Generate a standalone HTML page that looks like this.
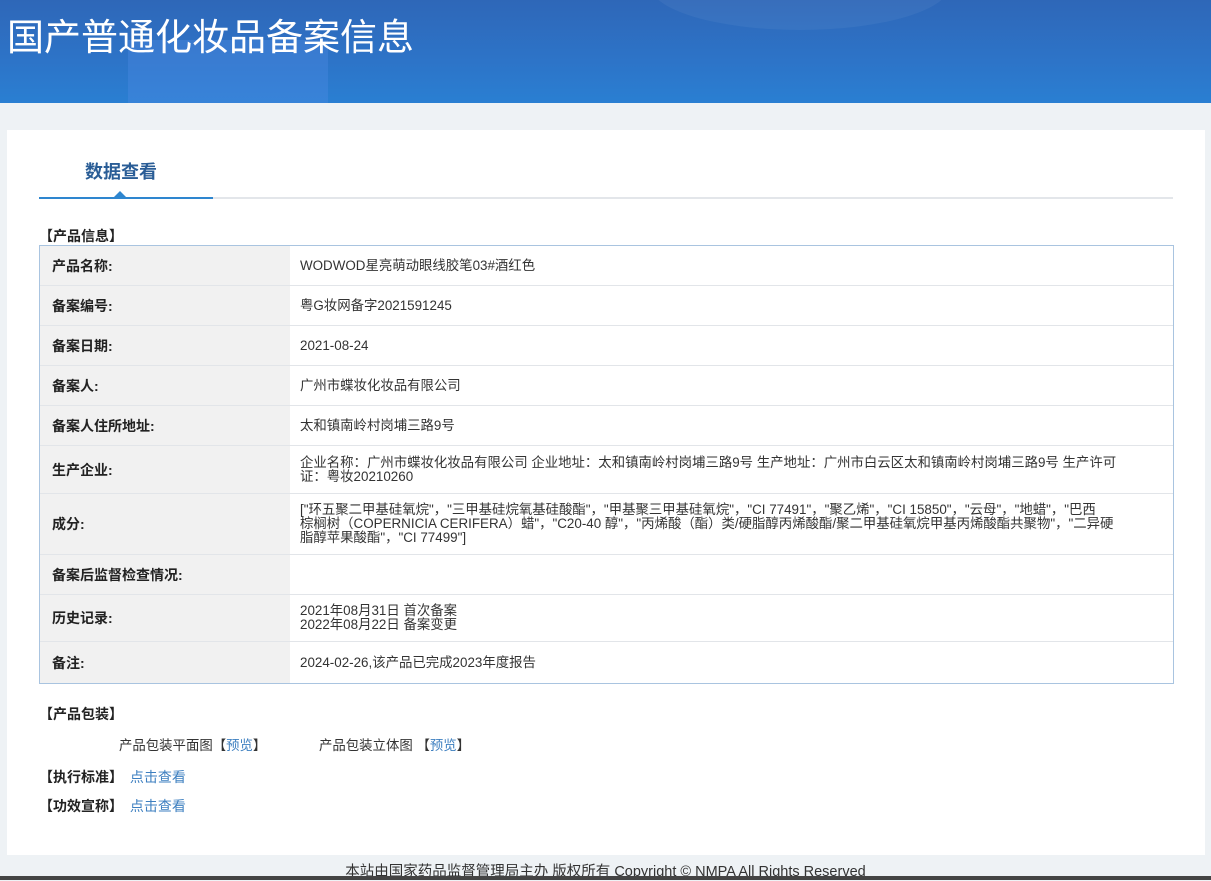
<!DOCTYPE html>
<html><head><meta charset="utf-8"><style>
*{margin:0;padding:0;box-sizing:border-box}
body{width:1211px;height:880px;background:#eef2f5;font-family:"Liberation Sans","Noto Sans CJK SC",sans-serif;color:#333;position:relative;overflow:hidden}
.hd{position:absolute;left:0;top:0;width:1211px;height:103px;background:linear-gradient(180deg,#2e67b8 0%,#2d74c8 60%,#2a7fd2 100%);overflow:hidden}
.hd .b1{position:absolute;left:128px;top:40px;width:200px;height:63px;background:rgba(80,140,230,.35)}
.hd .b2{position:absolute;left:650px;top:-60px;width:300px;height:90px;border-radius:50%;background:rgba(255,255,255,.05)}
.hd h1{position:absolute;left:7px;top:7px;font-size:37px;font-weight:normal;color:#fff;font-family:"Liberation Sans","Noto Sans CJK SC",sans-serif}
.pn{position:absolute;left:7px;top:130px;width:1198px;height:725px;background:#fff}
.tab{position:absolute;left:78px;top:28px;font-size:18px;font-weight:bold;color:#2a5d96}
.tl{position:absolute;left:32px;top:67px;width:1134px;height:2px;background:#e3e6ea}
.tl2{position:absolute;left:32px;top:67px;width:174px;height:2px;background:#2e86cf}
.tri{position:absolute;left:106px;top:61px;width:0;height:0;border-left:7px solid transparent;border-right:7px solid transparent;border-bottom:7px solid #2e86cf}
.sec{position:absolute;font-size:14px;font-weight:bold;color:#222}
table{position:absolute;left:32px;top:115px;width:1135px;border-collapse:separate;border-spacing:0;border:1px solid #a9c4e0;font-size:13.4px}
td{border-bottom:1px solid #e2e5e9;vertical-align:middle;line-height:14px}
tr:last-child td{border-bottom:none}
td.l{width:250px;background:#f1f1f1;font-weight:bold;padding-left:12px;color:#222;font-size:14px}
td.v{padding-left:10px;color:#333}
.a{color:#3d7fc0}
.f{position:absolute;left:0;width:1211px;top:860px;text-align:center;font-size:14.5px;color:#333}
.bl{position:absolute;left:0;top:876px;width:1211px;height:4px;background:#444}
</style></head><body>
<div class="hd"><div class="b1"></div><div class="b2"></div><h1>国产普通化妆品备案信息</h1></div>
<div class="pn">
<div class="tab">数据查看</div>
<div class="tl"></div><div class="tl2"></div><div class="tri"></div>
<div class="sec" style="left:32px;top:96px">【产品信息】</div>
<table>
<tr style="height:40px"><td class="l">产品名称:</td><td class="v">WODWOD星亮萌动眼线胶笔03#酒红色</td></tr>
<tr style="height:40px"><td class="l">备案编号:</td><td class="v">粤G妆网备字2021591245</td></tr>
<tr style="height:40px"><td class="l">备案日期:</td><td class="v">2021-08-24</td></tr>
<tr style="height:40px"><td class="l">备案人:</td><td class="v">广州市蝶妆化妆品有限公司</td></tr>
<tr style="height:40px"><td class="l">备案人住所地址:</td><td class="v">太和镇南岭村岗埔三路9号</td></tr>
<tr style="height:48px"><td class="l">生产企业:</td><td class="v">企业名称：广州市蝶妆化妆品有限公司 企业地址：太和镇南岭村岗埔三路9号 生产地址：广州市白云区太和镇南岭村岗埔三路9号 生产许可<br>证：粤妆20210260</td></tr>
<tr style="height:61px"><td class="l">成分:</td><td class="v">["环五聚二甲基硅氧烷"，"三甲基硅烷氧基硅酸酯"，"甲基聚三甲基硅氧烷"，"CI 77491"，"聚乙烯"，"CI 15850"，"云母"，"地蜡"，"巴西<br>棕榈树（COPERNICIA CERIFERA）蜡"，"C20-40 醇"，"丙烯酸（酯）类/硬脂醇丙烯酸酯/聚二甲基硅氧烷甲基丙烯酸酯共聚物"，"二异硬<br>脂醇苹果酸酯"，"CI 77499"]</td></tr>
<tr style="height:40px"><td class="l">备案后监督检查情况:</td><td class="v"></td></tr>
<tr style="height:47px"><td class="l">历史记录:</td><td class="v">2021年08月31日 首次备案<br>2022年08月22日 备案变更</td></tr>
<tr style="height:41px"><td class="l">备注:</td><td class="v">2024-02-26,该产品已完成2023年度报告</td></tr>
</table>
<div class="sec" style="left:32px;top:574px">【产品包装】</div>
<div style="position:absolute;left:112px;top:604px;font-size:13.4px">产品包装平面图【<span class="a">预览</span>】</div>
<div style="position:absolute;left:312px;top:604px;font-size:13.4px">产品包装立体图 【<span class="a">预览</span>】</div>
<div class="sec" style="left:32px;top:637px">【执行标准】 <span class="a" style="font-weight:normal;margin-left:3px">点击查看</span></div>
<div class="sec" style="left:32px;top:666px">【功效宣称】 <span class="a" style="font-weight:normal;margin-left:3px">点击查看</span></div>
</div>
<div class="f">本站由国家药品监督管理局主办 版权所有 Copyright © NMPA All Rights Reserved</div>
<div class="bl"></div>
</body></html>
